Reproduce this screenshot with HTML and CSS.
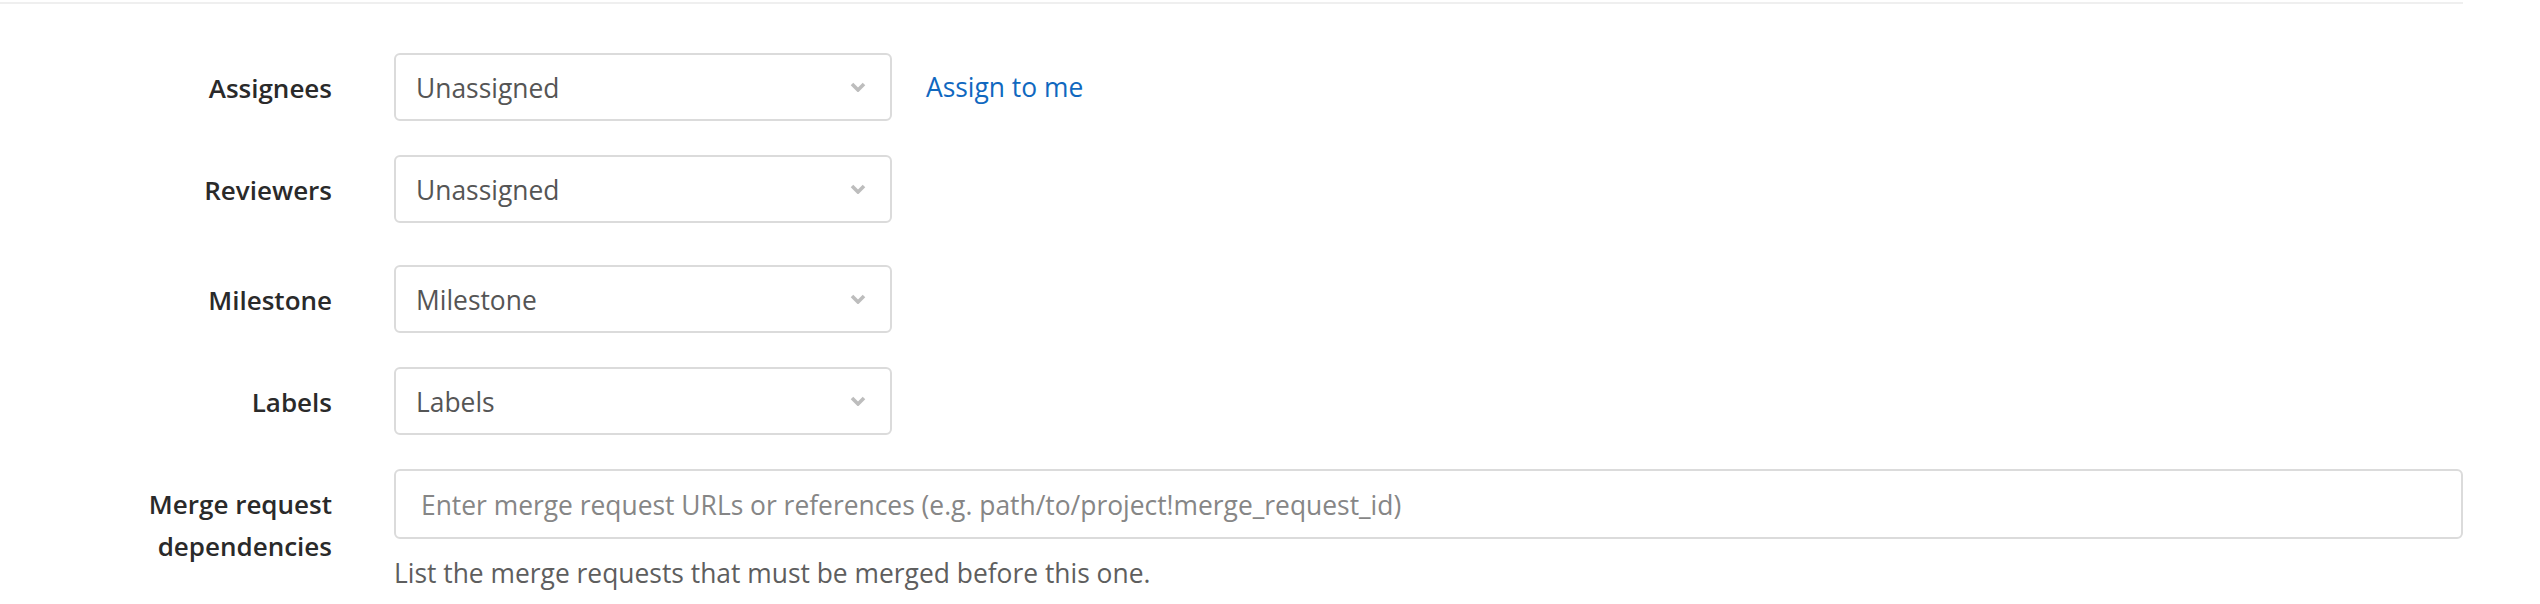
FILE: index.html
```html
<!DOCTYPE html>
<html lang="en">
<head>
<meta charset="utf-8">
<title>Merge request form</title>
<link rel="stylesheet" href="styles.css">
</head>
<body>
<div class="page">
  <div class="divider"></div>
  <form class="form">
    <div class="row">
      <label class="label">Assignees</label>
      <div class="field">
        <div class="dropdown"><span>Unassigned</span><svg class="chev" width="16" height="10" viewBox="0 0 16 10"><path d="M2 2 L8 8 L14 2" fill="none" stroke="#bdbdbd" stroke-width="3.6"/></svg></div>
        <a class="link" href="#">Assign to me</a>
      </div>
    </div>
    <div class="row">
      <label class="label">Reviewers</label>
      <div class="field">
        <div class="dropdown"><span>Unassigned</span><svg class="chev" width="16" height="10" viewBox="0 0 16 10"><path d="M2 2 L8 8 L14 2" fill="none" stroke="#bdbdbd" stroke-width="3.6"/></svg></div>
      </div>
    </div>
    <div class="row row-wide">
      <label class="label">Milestone</label>
      <div class="field">
        <div class="dropdown"><span>Milestone</span><svg class="chev" width="16" height="10" viewBox="0 0 16 10"><path d="M2 2 L8 8 L14 2" fill="none" stroke="#bdbdbd" stroke-width="3.6"/></svg></div>
      </div>
    </div>
    <div class="row">
      <label class="label">Labels</label>
      <div class="field">
        <div class="dropdown"><span>Labels</span><svg class="chev" width="16" height="10" viewBox="0 0 16 10"><path d="M2 2 L8 8 L14 2" fill="none" stroke="#bdbdbd" stroke-width="3.6"/></svg></div>
      </div>
    </div>
    <div class="row">
      <label class="label">Merge request dependencies</label>
      <div class="field-col">
        <div class="input">Enter merge request URLs or references (e.g. path/to/project!merge_request_id)</div>
        <div class="help">List the merge requests that must be merged before this one.</div>
      </div>
    </div>
  </form>
</div>
</body>
</html>
```

FILE: styles.css
```css
body {
  margin: 0;
  background: #ffffff;
  font-family: "Open Sans", "Noto Sans", sans-serif;
  font-size: 26.4px;
  line-height: 42px;
  color: #2e2e2e;
}

.page {
  width: 2463px;
}

.divider {
  margin-top: 2px;
  height: 2px;
  background: #efefef;
}

.form {
  padding-top: 49px;
}

.row {
  display: grid;
  grid-template-columns: 332px 1fr;
  column-gap: 62px;
  align-items: start;
}

.row + .row {
  margin-top: 34px;
}

.row.row-wide {
  margin-top: 42px;
}

.label {
  text-align: right;
  font-weight: 600;
  font-size: 26px;
  padding-top: 14px;
  color: #2a2a2a;
}

.field {
  display: flex;
  align-items: center;
  gap: 34px;
}

.dropdown {
  box-sizing: border-box;
  width: 498px;
  height: 68px;
  border: 2px solid #dbdbdb;
  border-radius: 6px;
  display: flex;
  align-items: center;
  justify-content: space-between;
  padding: 2px 24px 0 20px;
  color: #555555;
}

.chev {
  display: block;
  margin-top: -2px;
}

.link {
  color: #1068bf;
  text-decoration: none;
}

.input {
  box-sizing: border-box;
  height: 70px;
  border: 2px solid #dbdbdb;
  border-radius: 6px;
  padding: 2px 25px 0;
  display: flex;
  align-items: center;
  color: #868686;
}

.help {
  margin-top: 13px;
  color: #5e5e5e;
}
```
